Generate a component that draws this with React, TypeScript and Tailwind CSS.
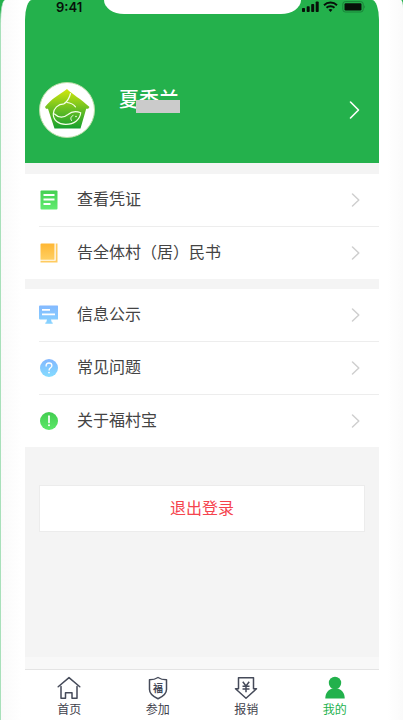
import React from "react";

interface MenuItem {
    label: string;
    icon: React.ReactNode;
}

const VoucherIcon = () => (
    <svg width="19" height="20" viewBox="0 0 19 20" fill="none" aria-hidden="true">
        <defs>
            <linearGradient id="voucher" x1="0" y1="0" x2="0" y2="1">
                <stop offset="0" stopColor="#45cf52" />
                <stop offset="1" stopColor="#62ec70" />
            </linearGradient>
        </defs>
        <rect x="1.5" y="0.5" width="17" height="19" rx="1" fill="url(#voucher)" />
        <path d="M4.5 5h11M4.5 9.500h11M4.5 14h7" stroke="#fff" strokeWidth="1.8" />
    </svg>
);

const BookIcon = () => (
    <svg width="19" height="20" viewBox="0 0 19 20" fill="none" aria-hidden="true">
        <defs>
            <linearGradient id="book" x1="0" y1="0" x2="0" y2="1">
                <stop offset="0" stopColor="#ffb733" />
                <stop offset="1" stopColor="#ffcf62" />
            </linearGradient>
        </defs>
        <path d="M2.5 0.5h13v16.200h-14V1.5a1 1 0 0 1 1-1z" fill="url(#book)" />
        <path d="M16.7 0.5h1.800v19h-17v-1.700h15.200z" fill="#ffcb60" />
    </svg>
);

const BoardIcon = () => (
    <svg width="19" height="20" viewBox="0 0 19 20" fill="none" aria-hidden="true">
        <defs>
            <linearGradient id="board" x1="0" y1="0" x2="0" y2="1">
                <stop offset="0" stopColor="#84b9ff" />
                <stop offset="1" stopColor="#87d3ff" />
            </linearGradient>
        </defs>
        <path
            d="M1 0.5h17.5a.5.5 0 0 1 .5.5v13a.5.5 0 0 1-.5.5h-6.500l.8 3h.9v1.300H6.300v-1.300h.9l.8-3h-7a1 1 0 0 1-1-1v-12a1 1 0 0 1 1-1z"
            fill="url(#board)"
        />
        <path d="M3 4.800h8M3 9.300h13" stroke="#fff" strokeWidth="1.700" />
    </svg>
);

const QuestionIcon = () => (
    <svg width="19" height="20" viewBox="0 0 19 20" fill="none" aria-hidden="true">
        <defs>
            <linearGradient id="question" x1="0" y1="0" x2="0" y2="1">
                <stop offset="0" stopColor="#82b6ff" />
                <stop offset="1" stopColor="#84dcff" />
            </linearGradient>
        </defs>
        <circle cx="10" cy="10" r="9" fill="url(#question)" />
        <path
            d="M7.100 8c0-1.800 1.200-3 2.900-3s2.900 1.200 2.900 2.700c0 2-2.800 2.100-2.800 4.300"
            stroke="#fff"
            strokeWidth="1.300"
            strokeLinecap="round"
        />
        <circle cx="10" cy="14.600" r="0.900" fill="#fff" />
    </svg>
);

const AboutIcon = () => (
    <svg width="19" height="20" viewBox="0 0 19 20" fill="none" aria-hidden="true">
        <defs>
            <linearGradient id="about" x1="0" y1="0" x2="0" y2="1">
                <stop offset="0" stopColor="#42cc50" />
                <stop offset="1" stopColor="#5ce868" />
            </linearGradient>
        </defs>
        <circle cx="10" cy="10" r="9" fill="url(#about)" />
        <path d="M10 5.200v6.200" stroke="#fff" strokeWidth="1.700" strokeLinecap="round" />
        <circle cx="10" cy="14.300" r="1" fill="#fff" />
    </svg>
);

const Logo = () => (
    <svg viewBox="0 0 56 56" className="h-14 w-14" fill="none" aria-hidden="true">
        <defs>
            <linearGradient id="logo" x1="0" y1="0" x2="0" y2="1">
                <stop offset="0" stopColor="#d3e80c" />
                <stop offset="0.5" stopColor="#6cbf22" />
                <stop offset="1" stopColor="#16a02e" />
            </linearGradient>
        </defs>
        <circle cx="28" cy="28" r="27.500" fill="#fff" stroke="#b9dda6" strokeWidth="1" />
        <path d="M28 7C33 12 42 17 50.500 25l-1.300 1.800h-2L41.500 46.500h-26L9 26.800H7L6 25C12 17 20 13 28 7z" fill="url(#logo)" />
        <path
            d="M31.500 11.500c-1 4-3 8-6.500 10.300M25 21.800c-6 .2-10.500 4.500-10.700 10C14 38 19.500 42.500 27 42.300c8 0 14-4.500 14.700-11.500-5-2-9.500-1-12.700 1.700-4.500 3.500-9 3.800-13.500-.5"
            stroke="#f4ffe8"
            strokeWidth="1.200"
            strokeLinecap="round"
        />
        <path d="M28 20.500c3.500.3 6.500 1.700 8.500 4.300" stroke="#f4ffe8" strokeWidth="1.200" strokeLinecap="round" />
        <path d="M34 33.500c-2 .8-3 3-1.500 5" stroke="#f4ffe8" strokeWidth="1" strokeLinecap="round" />
        <circle cx="37" cy="34.500" r="0.800" fill="#f4ffe8" />
    </svg>
);

const StatusIcons = () => (
    <svg width="64" height="12" viewBox="0 0 64 12" fill="none" aria-hidden="true">
        <g fill="#071009">
            <rect x="0" y="7" width="3" height="4" rx="0.800" />
            <rect x="4.700" y="5.200" width="3" height="5.800" rx="0.800" />
            <rect x="9.200" y="3" width="3" height="8" rx="0.800" />
            <rect x="13.700" y="0.500" width="3" height="10.500" rx="0.800" />
            <rect x="42.500" y="2.200" width="17" height="7.200" rx="1.200" />
        </g>
        <path d="M22 4.200c3.600-3.500 9.400-3.500 13 0M24.500 6.800c2.200-2.100 5.800-2.100 8 0" stroke="#071009" strokeWidth="1.900" />
        <path d="M26.500 8.800c1.200-1 2.800-1 4 0l-2 2.200z" fill="#071009" />
        <rect x="40.800" y="0.600" width="20.400" height="10.400" rx="2.500" stroke="#1a8339" strokeWidth="1" />
        <path d="M62.300 4.200c1.100.5 1.100 2.700 0 3.200z" fill="#1a8339" />
    </svg>
);

const HomeIcon = () => (
    <svg width="24" height="24" viewBox="0 0 24 24" fill="none" stroke="#454a59" strokeWidth="1.500" aria-hidden="true">
        <path d="M4 10.500v11.800h4.500v-5.500h6.500v5.500h5V10.500M1.200 10.800L12 1.600l10.800 9.200" strokeLinejoin="round" strokeLinecap="round" />
    </svg>
);

const ShieldIcon = () => (
    <svg width="24" height="24" viewBox="0 0 24 24" fill="none" aria-hidden="true">
        <path
            d="M12 1.500c2.500 1.700 5.300 2.300 8.500 2.300v9.700c0 4.200-3.500 7-8.500 9.300-5-2.300-8.500-5.100-8.500-9.300V3.800c3.200 0 6-.6 8.500-2.300z"
            stroke="#454a59"
            strokeWidth="1.500"
            strokeLinejoin="round"
        />
        <text x="12" y="15.500" fontSize="10" fontWeight="700" textAnchor="middle" fill="#454a59">
            福
        </text>
    </svg>
);

const ClaimIcon = () => (
    <svg width="24" height="24" viewBox="0 0 24 24" fill="none" stroke="#454a59" strokeWidth="1.500" aria-hidden="true">
        <path d="M4.500 1.700h15v11h3L12 22.300 1.500 12.700h3z" strokeLinejoin="round" />
        <path d="M8.800 5.800L12 10l3.200-4.200M8.500 10.300h7M8.500 13h7M12 10v6.300" />
    </svg>
);

const MineIcon = () => (
    <svg width="24" height="24" viewBox="0 0 24 24" fill="#22b14c" aria-hidden="true">
        <circle cx="12" cy="7" r="6.200" />
        <path d="M2.300 22.500c0-5 2.500-8.500 6.700-10h6c4.200 1.500 6.700 5 6.700 10z" />
    </svg>
);

const RowArrow = () => (
    <svg className="ml-auto" width="20" height="20" viewBox="0 0 20 20" fill="none" aria-hidden="true">
        <path d="M7.500 4l6.300 6-6.300 6" stroke="#cfcfcf" strokeWidth="1.500" strokeLinecap="round" strokeLinejoin="round" />
    </svg>
);

const MENU_GROUPS: MenuItem[][] = [
    [
        { label: "查看凭证", icon: <VoucherIcon /> },
        { label: "告全体村（居）民书", icon: <BookIcon /> },
    ],
    [
        { label: "信息公示", icon: <BoardIcon /> },
        { label: "常见问题", icon: <QuestionIcon /> },
        { label: "关于福村宝", icon: <AboutIcon /> },
    ],
];

const TABS = [
    { label: "首页", icon: <HomeIcon />, active: false },
    { label: "参加", icon: <ShieldIcon />, active: false },
    { label: "报销", icon: <ClaimIcon />, active: false },
    { label: "我的", icon: <MineIcon />, active: true },
];

const Header = () => (
    <header className="relative bg-[#24b14c] pb-[25px]">
        <div className="absolute inset-x-0 top-0 mx-auto h-3.5 w-[197px] rounded-bl-[20px_14px] rounded-br-[20px_14px] bg-white" />
        <div className="flex h-3.5 items-center justify-between pr-[13px] pl-[31px]">
            <span className="font-[Inter] text-[13px] leading-3.5 font-semibold text-[#071009]">9:41</span>
            <StatusIcons />
        </div>
        <a href="#profile" className="mt-[68px] flex items-center px-3.5 text-white">
            <Logo />
            <div className="relative ml-6 pb-5">
                <span className="block text-xl leading-6 font-medium">夏秀兰</span>
                <span className="absolute top-3 left-[17px] h-[13px] w-11 bg-[#cbcbcb]" />
            </div>
            <svg className="ml-auto" width="20" height="20" viewBox="0 0 20 20" fill="none" aria-hidden="true">
                <path d="M5.500 2l8 8-8 8" stroke="#fff" strokeWidth="1.600" strokeLinecap="round" strokeLinejoin="round" />
            </svg>
        </a>
    </header>
);

const MenuGroup = ({ items }: { items: MenuItem[] }) => (
    <ul className="bg-white">
        {items.map((item, index) => (
            <li key={item.label} className="pl-3.5">
                <a
                    href="#menu"
                    className={`flex items-center pr-3.5 text-base text-[#444444] ${index > 0 ? "h-[53px] border-t border-[#ededed]" : "h-[52px]"}`}
                >
                    {item.icon}
                    <span className="ml-[19px]">{item.label}</span>
                    <RowArrow />
                </a>
            </li>
        ))}
    </ul>
);

const TabBar = () => (
    <nav className="flex border-t border-[#e4e4e4] bg-white pt-1.5">
        {TABS.map((tab) => (
            <a
                key={tab.label}
                href="#tab"
                className={`flex flex-1 flex-col items-center text-xs leading-5 ${tab.active ? "text-[#22b14c]" : "text-[#3f424c]"}`}
            >
                {tab.icon}
                {tab.label}
            </a>
        ))}
    </nav>
);

export default function App() {
    return (
        <div className="min-h-screen bg-[#24b14c] font-['Liberation_Sans','Noto_Sans_CJK_SC',sans-serif]">
            <div className="flex min-h-screen rounded-tl-[5px_24px] rounded-tr-[2px_8px] border-l border-[#a8e0ba] bg-[linear-gradient(90deg,#fafafa,#fff_5%,#fff_96%,#fafafa)] px-6">
                <div className="flex flex-1 flex-col overflow-hidden rounded-tl-[7px_20px] rounded-tr-[7px_20px] bg-[#f4f4f4]">
                    <Header />
                    <main className="flex flex-1 flex-col gap-2.5 pt-[11px]">
                        {MENU_GROUPS.map((items) => (
                            <MenuGroup key={items[0].label} items={items} />
                        ))}
                        <button
                            type="button"
                            className="mx-3.5 mt-7 h-[47px] border border-[#ececec] bg-white text-base text-[#f5444e]"
                        >
                            退出登录
                        </button>
                        <div className="mt-auto h-3 bg-[#f8f8f8]" />
                    </main>
                    <TabBar />
                </div>
            </div>
        </div>
    );
}
